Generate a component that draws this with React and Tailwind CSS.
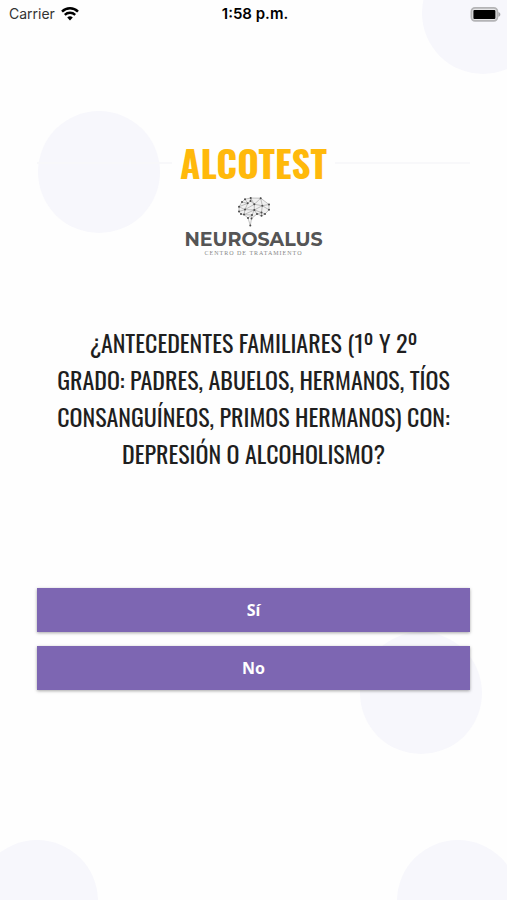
const circles = [
  "-top-12 -right-[37px]",
  "top-[111px] left-[38px]",
  "top-[632px] right-[25px]",
  "-bottom-[62px] -left-6",
  "-bottom-[62px] -right-3",
];

const answers = ["Sí", "No"];

// Nodes of the brain drawing, joined by index in `links`
const nodes = [
  [8, 3.2], [13.7, 2], [23.7, 2.2], [32, 8.5], [32, 13.8], [28, 18], [24.5, 19.8],
  [25.3, 9.7], [17.3, 8.3], [17.3, 14], [10.7, 7.3], [5, 6], [2, 10.7],
  [2, 15.5], [8, 13.6], [7, 18.6], [15, 19], [20, 18], [14.5, 22.5],
  [13.3, 29.5], [4, 18], [13.5, 5], [24.5, 16.5], [11, 22],
];

const links = [
  [0, 1], [1, 2], [2, 3], [3, 4], [4, 5], [5, 6], [6, 17], [17, 18], [18, 19],
  [19, 23], [23, 15], [18, 16], [16, 15], [15, 20], [20, 13], [13, 12], [12, 11],
  [11, 0], [0, 10], [10, 21], [21, 1], [21, 8], [8, 2], [8, 7], [7, 3], [7, 4],
  [7, 2], [7, 22], [22, 5], [22, 6], [9, 8], [9, 14], [14, 10], [14, 12],
  [14, 13], [14, 15], [9, 16], [9, 17], [11, 10], [9, 22], [12, 10], [15, 9],
  [8, 1], [17, 22], [7, 9], [23, 16], [8, 14],
];

function WifiIcon() {
  return (
    <svg className="w-[18px] h-[14px]" viewBox="0 0 18 14" fill="none" stroke="#000">
      <path d="M1 4.6a11.5 11.5 0 0 1 16 0" strokeWidth="2.5" />
      <path d="M3.8 7.9a7.4 7.4 0 0 1 10.4 0" strokeWidth="2.3" />
      <path d="M9 13.5 6.2 10.6a4 4 0 0 1 5.6 0Z" fill="#000" stroke="none" />
    </svg>
  );
}

function BatteryIcon() {
  return (
    <svg className="w-[31px] h-[15px]" viewBox="0 0 31 15">
      <rect x="1.4" y="0.9" width="26" height="13" rx="3.6" fill="#e4e4e6" stroke="#b4b4b6" strokeWidth="1.8" />
      <rect x="3.4" y="2.9" width="22" height="9" rx="1" fill="#000" />
      <path d="M28.4 5c2.6.8 2.6 4 0 4.8Z" fill="#a5a5a8" />
    </svg>
  );
}

function BrainIcon() {
  return (
    <svg className="w-[34px] h-[31px]" viewBox="0 0 34 31">
      <path
        d="M8 3.2 13.7 2 23.7 2.2 32 8.5V13.8L28 18 24.5 19.8 20 18 14.5 22.5 7 18.6 2 15.5V10.7L5 6Z"
        fill="#f0f0f0"
      />
      <g stroke="#999" strokeWidth="0.6">
        {links.map(([a, b]) => (
          <line
            key={`${a}-${b}`}
            x1={nodes[a][0]}
            y1={nodes[a][1]}
            x2={nodes[b][0]}
            y2={nodes[b][1]}
          />
        ))}
      </g>
      <g fill="#4a4a4a">
        {nodes.map(([x, y]) => (
          <circle key={`${x}-${y}`} cx={x} cy={y} r="1" />
        ))}
      </g>
    </svg>
  );
}

export default function App() {
  return (
    <div className="relative min-h-screen overflow-hidden bg-[#fefefe] text-[#1f1f1f]">
      {/* Background circles */}
      {circles.map((place) => (
        <div
          key={place}
          className={`absolute size-[122px] rounded-full bg-[#f7f7fc] ${place}`}
        />
      ))}

      <div className="relative">
        {/* Status bar */}
        <header className="grid grid-cols-3 items-center h-7 pl-[9px] pr-1.5 font-[Inter,sans-serif] text-sm text-black">
          <div className="flex items-center gap-1.5 text-[#333]">
            <span>Carrier</span>
            <WifiIcon />
          </div>
          <span className="text-center text-[15px] font-semibold">1:58 p.m.</span>
          <div className="flex justify-end">
            <BatteryIcon />
          </div>
        </header>

        <main className="px-[37px] pt-[108px]">
          {/* Title and logo */}
          <div className="flex items-center gap-2">
            <div className="h-0.5 flex-1 bg-[#f8f8fa]" />
            <h1 className="font-[Oswald,sans-serif] text-[37px] leading-[54px] font-bold text-[#ffb90b]">
              ALCOTEST
            </h1>
            <div className="h-0.5 flex-1 bg-[#f8f8fa]" />
          </div>
          <div className="flex flex-col items-center pt-1.5">
            <BrainIcon />
            <p className="pt-[3px] font-[Montserrat,Inter,sans-serif] text-[19px] leading-5 font-bold text-[#555]">
              NEUROSALUS
            </p>
            <p className="font-['Liberation_Serif',serif] text-[6px] leading-[7px] tracking-[1px] text-[#888]">
              CENTRO DE TRATAMIENTO
            </p>
          </div>

          <h2 className="pt-[67px] text-center font-[Oswald,sans-serif] text-2xl leading-[37px] font-normal">
            ¿ANTECEDENTES FAMILIARES (1º Y 2º
            <br />
            GRADO: PADRES, ABUELOS, HERMANOS, TÍOS
            <br />
            CONSANGUÍNEOS, PRIMOS HERMANOS) CON:
            <br />
            DEPRESIÓN O ALCOHOLISMO?
          </h2>

          {/* Answers */}
          <div className="flex flex-col gap-[14px] pt-[116px] pb-[210px]">
            {answers.map((answer) => (
              <button
                key={answer}
                type="button"
                className="h-11 w-full bg-[#7d66b2] font-['Noto_Sans',sans-serif] text-base font-bold text-white shadow-[0_1px_3px_rgba(0,0,0,0.35)]"
              >
                {answer}
              </button>
            ))}
          </div>
        </main>
      </div>
    </div>
  );
}
